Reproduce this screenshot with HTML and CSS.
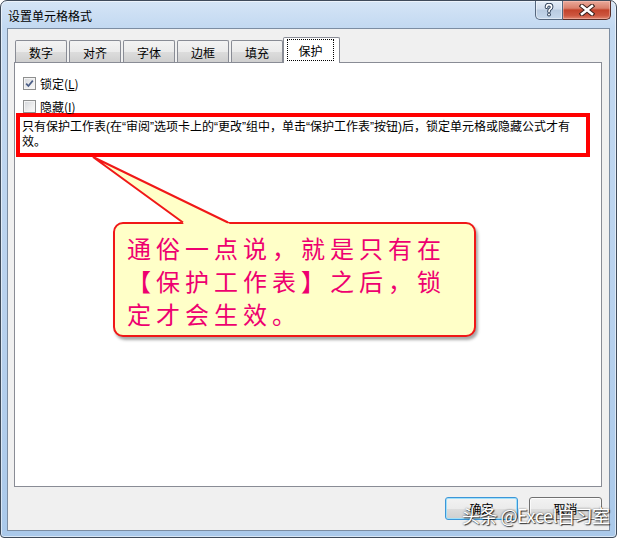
FILE: index.html
```html
<!DOCTYPE html>
<html lang="zh-CN">
<head>
<meta charset="utf-8">
<title>设置单元格格式</title>
<link rel="stylesheet" href="styles.css">
</head>
<body>
<div class="window">
  <div class="titlebar">
    <span class="title">设置单元格格式</span>
    <div class="caption">
      <span class="cbtn help">
        <svg width="10" height="14" viewBox="0 0 10 14">
          <path d="M2.5 4.2 Q2.5 1.6 5 1.6 Q7.6 1.6 7.6 4 Q7.6 5.5 5.8 6.4 Q5 6.9 5 8.6" fill="none" stroke="#2d3f57" stroke-width="3.6" stroke-linecap="round"/>
          <circle cx="5" cy="11.6" r="1.9" fill="#2d3f57"/>
          <path d="M2.5 4.2 Q2.5 1.6 5 1.6 Q7.6 1.6 7.6 4 Q7.6 5.5 5.8 6.4 Q5 6.9 5 8.6" fill="none" stroke="#fff" stroke-width="1.7" stroke-linecap="round"/>
          <circle cx="5" cy="11.6" r="1" fill="#fff"/>
        </svg>
      </span>
      <span class="cbtn close">
        <svg width="16" height="12" viewBox="0 0 16 12">
          <path d="M3 2 L13 10 M13 2 L3 10" stroke="#3a1f1a" stroke-width="4.6" stroke-linecap="square"/>
          <path d="M3 2 L13 10 M13 2 L3 10" stroke="#fff" stroke-width="2.6" stroke-linecap="square"/>
        </svg>
      </span>
    </div>
  </div>

  <div class="client">
    <div class="tabs">
      <span class="tab">数字</span>
      <span class="tab">对齐</span>
      <span class="tab">字体</span>
      <span class="tab">边框</span>
      <span class="tab">填充</span>
      <span class="tab active"><span class="focus">保护</span></span>
    </div>

    <div class="panel">
      <div class="check">
        <span class="box">
          <svg width="11" height="11" viewBox="0 0 11 11"><path d="M2.2 5.6 L4.4 8 L8.8 2.6" fill="none" stroke="#4a5d86" stroke-width="1.7"/></svg>
        </span>
        <span>锁定(<u>L</u>)</span>
      </div>
      <div class="check">
        <span class="box"></span>
        <span>隐藏(<u>I</u>)</span>
      </div>
      <p class="note">只有保护工作表(在“审阅”选项卡上的“更改”组中，单击“保护工作表”按钮)后，锁定单元格或隐藏公式才有效。</p>

      <div class="callout">通俗一点说，就是只有在【保护工作表】之后，锁定才会生效。</div>
      <svg class="tail" width="160" height="80" viewBox="0 0 160 80">
        <polygon points="8,7 99,74 145,74" fill="#ffffc8"/>
        <polyline points="98,72.5 8,7 143,72.5" fill="none" stroke="#f01818" stroke-width="2" stroke-linejoin="miter"/>
      </svg>
    </div>

    <div class="buttons">
      <span class="btn default">确定</span>
      <span class="btn">取消</span>
    </div>
  </div>

  <div class="watermark">头条 @Excel自习室</div>
</div>
</body>
</html>
```

FILE: styles.css
```css
* { box-sizing: border-box; }

html, body {
  margin: 0;
  padding: 0;
  background: #fff;
}

body {
  font-family: "Liberation Sans", "Noto Sans CJK SC", sans-serif;
  font-size: 12px;
  color: #000;
}

.window {
  position: relative;
  width: 617px;
  height: 538px;
  border: 1px solid #3f4b5a;
  border-radius: 7px 7px 4px 4px;
  background: linear-gradient(180deg, #d5e5f6 0, #c3d9f1 26px, #b9d2ee 55%, #aac9ea 100%);
  box-shadow: inset 0 0 0 1px rgba(255, 255, 255, 0.55);
  display: flex;
  flex-direction: column;
}

.titlebar {
  flex: none;
  height: 27px;
  display: flex;
  justify-content: space-between;
  align-items: flex-start;
}

.title {
  padding: 8px 0 0 7px;
  line-height: 14px;
  font-family: "Noto Sans CJK SC", sans-serif;
  font-size: 12px;
}

.caption {
  display: flex;
  margin-right: 5px;
}

.cbtn {
  height: 19px;
  display: flex;
  align-items: center;
  justify-content: center;
}

.help {
  width: 28px;
  border: 1px solid #55677e;
  border-top: none;
  border-radius: 0 0 0 5px;
  background: linear-gradient(180deg, #e3ecf6 0, #d0dded 45%, #b9cbe0 50%, #c6d8ec 100%);
  box-shadow: inset 0 0 0 1px rgba(255, 255, 255, 0.45);
}

.close {
  width: 48px;
  border: 1px solid #5a2e28;
  border-top: none;
  border-left: none;
  border-radius: 0 0 5px 0;
  background: linear-gradient(180deg, #eaa99a 0, #d9806c 40%, #c3432b 50%, #cc563f 80%, #e08670 100%);
  box-shadow: inset 0 0 0 1px rgba(255, 210, 200, 0.4);
}

.client {
  flex: none;
  height: 503px;
  margin: 0 6px;
  border: 1px solid #7c8da2;
  background: #f0f0f0;
  padding: 8px 7px 0 6px;
  display: flex;
  flex-direction: column;
}

.tabs {
  height: 25px;
  display: flex;
  align-items: flex-end;
  gap: 2px;
  padding-left: 1px;
}

.tab {
  width: 52px;
  height: 22px;
  border: 1px solid #898c95;
  border-bottom: none;
  border-radius: 2px 2px 0 0;
  background: linear-gradient(180deg, #f3f3f3 0, #ebebeb 50%, #dddddd 50%, #cfcfcf 100%);
  display: flex;
  align-items: center;
  justify-content: center;
  padding-top: 2px;
  font-family: "Noto Sans CJK SC", sans-serif;
}

.tab.active {
  width: 57px;
  height: 26px;
  margin: 0 0 -1px -2px;
  padding: 1px 0 0 0;
  align-items: flex-start;
  background: #fff;
  position: relative;
  z-index: 1;
}

.focus {
  width: 47px;
  height: 22px;
  border: 1px dotted #000;
  display: flex;
  align-items: center;
  justify-content: center;
  margin-left: -2px;
}

.panel {
  position: relative;
  height: 425px;
  flex: none;
  background: #fff;
  border: 1px solid #898c95;
  padding: 14px 11px 0 1px;
}

.check {
  display: flex;
  align-items: center;
  gap: 4px;
  height: 13px;
  padding-left: 7px;
  margin-bottom: 10px;
  font-family: "Noto Sans CJK SC", sans-serif;
}

.check + .check {
  margin-bottom: 0;
}

.box {
  width: 13px;
  height: 13px;
  border: 1px solid #8e8f8f;
  background: linear-gradient(135deg, #d3d6db 0, #eeeeee 60%, #fafafa 100%);
  box-shadow: inset 0 0 0 1px #f4f4f4;
  display: flex;
  align-items: center;
  justify-content: center;
}

.check u {
  text-decoration: underline;
}

.note {
  margin: 0;
  border: 4px solid #ff0000;
  padding: 3px 4px 3px 2px;
  line-height: 15px;
}

.callout {
  position: absolute;
  left: 98px;
  top: 159px;
  width: 363px;
  border: 2px solid #f01818;
  border-radius: 10px;
  background: #ffffc8;
  box-shadow: 2px 3px 3px rgba(0, 0, 0, 0.35);
  padding: 7px 20px 5px 12px;
  font-family: "Noto Sans CJK SC", sans-serif;
  font-size: 24px;
  line-height: 33px;
  letter-spacing: 5px;
  color: #ee0070;
}

.tail {
  position: absolute;
  left: 70px;
  top: 87px;
}

.buttons {
  display: flex;
  justify-content: flex-end;
  gap: 11px;
  margin-top: 10px;
}

.btn {
  width: 73px;
  height: 23px;
  border: 1px solid #707070;
  border-radius: 3px;
  background: linear-gradient(180deg, #f2f2f2 0, #ebebeb 50%, #dddddd 50%, #cfcfcf 100%);
  box-shadow: inset 0 0 0 1px rgba(255, 255, 255, 0.75);
  display: flex;
  align-items: center;
  justify-content: center;
  font-family: "Noto Sans CJK SC", sans-serif;
}

.btn.default {
  border-color: #3c96d8;
  box-shadow: inset 0 0 0 1px #9fe0fa;
}

.watermark {
  position: absolute;
  left: 461px;
  top: 503px;
  font-family: "Noto Sans CJK SC", sans-serif;
  font-size: 18px;
  line-height: 22px;
  color: #fff;
  letter-spacing: -0.5px;
  text-shadow: 1px 1px 1px rgba(0, 0, 0, 0.75), 0 0 2px rgba(0, 0, 0, 0.6);
  white-space: nowrap;
}
```
